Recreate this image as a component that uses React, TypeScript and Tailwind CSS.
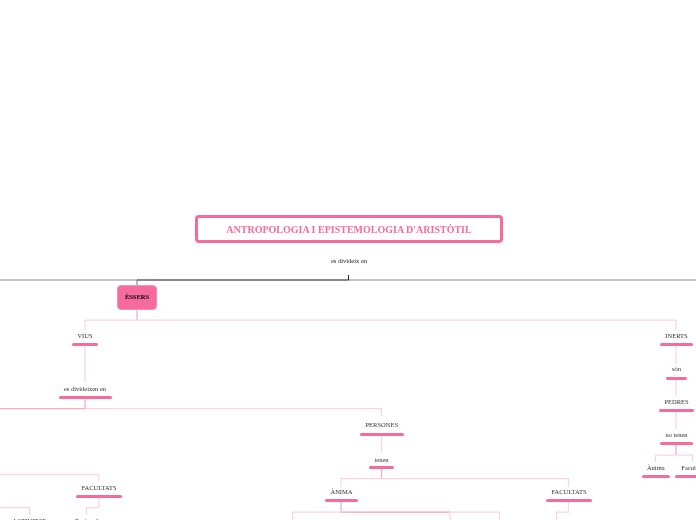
const serif = "font-['Liberation_Serif','Times_New_Roman',serif]";

type Topic = { label: string; textY: number; x1: number; x2: number; barY: number };

const topics: Topic[] = [
  { label: 'VIUS', textY: 336, x1: 72, x2: 98, barY: 343 },
  { label: 'es divideixen en', textY: 389, x1: 58.5, x2: 111.5, barY: 396 },
  { label: 'PERSONES', textY: 425, x1: 360, x2: 403.5, barY: 433 },
  { label: 'tenen', textY: 460, x1: 369, x2: 394, barY: 466 },
  { label: 'ÀNIMA', textY: 492, x1: 325, x2: 358, barY: 499 },
  { label: 'FACULTATS', textY: 492, x1: 546, x2: 592, barY: 499 },
  { label: 'FACULTATS', textY: 488, x1: 76, x2: 122, barY: 494.5 },
  { label: 'INERTS', textY: 336, x1: 660, x2: 693, barY: 343 },
  { label: 'són', textY: 369, x1: 666, x2: 687, barY: 376.5 },
  { label: 'PEDRES', textY: 402, x1: 659, x2: 694, barY: 409 },
  { label: 'no tenen', textY: 435, x1: 660, x2: 693, barY: 442 },
  { label: 'Ànima', textY: 468, x1: 641.5, x2: 670, barY: 475 },
  { label: 'Facultats', textY: 468, x1: 675, x2: 711, barY: 475 },
];

const light = '#fdd3e2';
const mid = '#fba9c6';

// connector paths of the map
const links: { d: string; color: string; w?: number }[] = [
  { d: 'M0 280H696', color: '#b0b0b0', w: 1.5 },
  { d: 'M137 280H348.5', color: '#777777', w: 1.5 },
  { d: 'M137 280V286', color: '#777777', w: 1 },
  { d: 'M348.5 275V280', color: '#222222', w: 1 },
  { d: 'M137 309V320', color: mid },
  { d: 'M85 320H676', color: light },
  { d: 'M85 320V330M676 320V330', color: light },
  { d: 'M85 346V382M676 346V364M676 379V396M676 412V429', color: light },
  { d: 'M85 398V408', color: mid },
  { d: 'M0 408.5H85', color: mid },
  { d: 'M85 408.5H381.5V416', color: light },
  { d: 'M381.5 436V452', color: light },
  { d: 'M381.5 468V478', color: mid },
  { d: 'M341 487V478.5H568.5V487', color: light },
  { d: 'M341 502V512', color: mid },
  { d: 'M292.5 520V512H450', color: light },
  { d: 'M341 512H450', color: mid },
  { d: 'M450 512H499.5V520M450 512V520', color: light },
  { d: 'M568.5 502V512H556.5V520', color: light },
  { d: 'M0 474.5H99V481', color: light },
  { d: 'M99 497V507.5H86.5V515', color: light },
  { d: 'M0 507.5H29.5V515', color: light },
  { d: 'M676 444V455', color: mid },
  { d: 'M655.5 462V455H692.5V462', color: light },
];

function TopicNode({ label, textY, x1, x2, barY }: Topic) {
  return (
    <div
      className="absolute flex flex-col items-center justify-between"
      style={{ left: x1, top: textY - 5.5, width: x2 - x1, height: barY + 3 - (textY - 5.5) }}
    >
      <span className="text-[6.5px] leading-[9px] text-[#333333] whitespace-nowrap">{label}</span>
      <div className="w-full h-[3px] rounded-full bg-[#f76a9c]" />
    </div>
  );
}

export default function App() {
  return (
    <div className={`relative w-[696px] h-[520px] overflow-hidden bg-white blur-[0.3px] ${serif}`}>
      <svg className="absolute inset-0" width="696" height="520" fill="none">
        {links.map((l, i) => (
          <path key={i} d={l.d} stroke={l.color} strokeWidth={l.w ?? 1.25} />
        ))}
      </svg>

      {/* central topic */}
      <div className="absolute left-[195px] top-[215px] w-[308px] h-[28px] pt-[1px] flex items-center justify-center rounded-[4px] border-[3px] border-[#f76a9c] bg-white">
        <span className="text-[10px] leading-none font-bold text-[#f76a9c] whitespace-nowrap">ANTROPOLOGIA I EPISTEMOLOGIA D'ARISTÒTIL</span>
      </div>

      <div className="absolute left-[299px] top-[256px] w-[100px] text-center text-[6.5px] leading-[9px] text-[#222222]">es divideix en</div>

      <div className="absolute left-[117px] top-[285px] w-[40px] h-[25px] flex items-center justify-center rounded-[4px] bg-[#f76a9c] border border-[#fb8cb4]">
        <span className="text-[6.5px] leading-none font-bold text-black">ÈSSERS</span>
      </div>

      {topics.map((t, i) => (
        <TopicNode key={i} {...t} />
      ))}

      {/* topics cut by the bottom edge */}
      <div className="absolute left-[0px] top-[515.5px] w-[58px] text-center text-[6.5px] leading-[9px] text-[#333333]">ACTIVITAT</div>
      <div className="absolute left-[36.5px] top-[515.5px] w-[100px] text-center text-[6.5px] leading-[9px] text-[#333333]">Racional</div>
    </div>
  );
}
